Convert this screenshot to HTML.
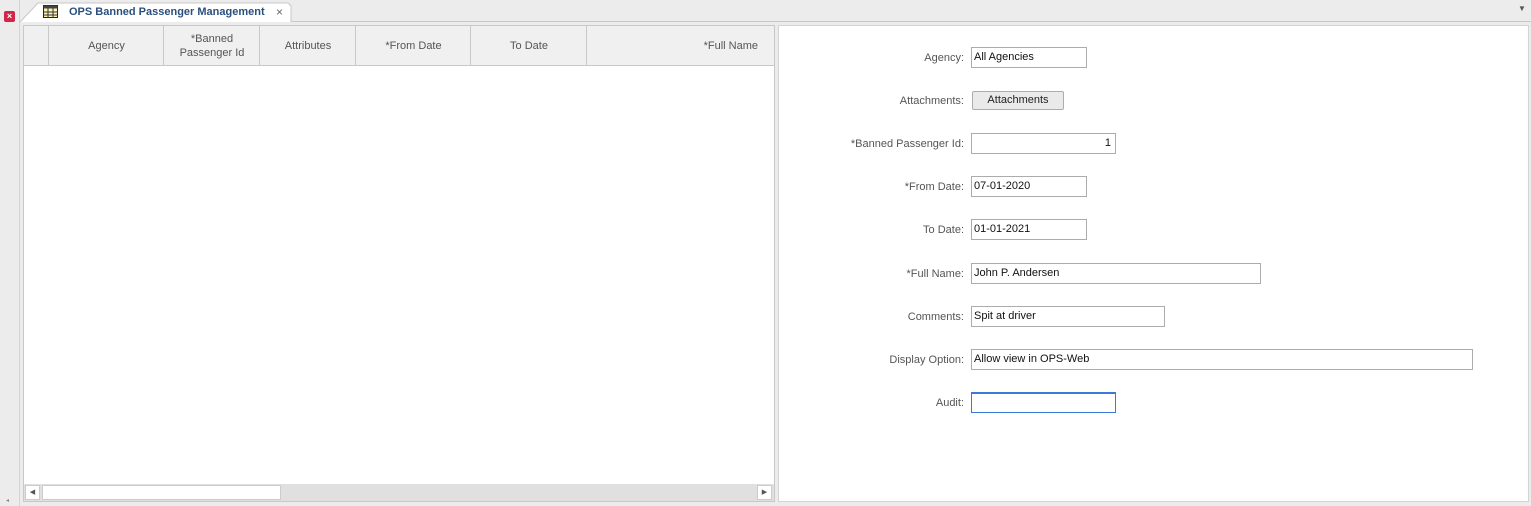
<!DOCTYPE html>
<html><head><style>
body{margin:0;width:1531px;height:506px;background:#ececec;font-family:"Liberation Sans",sans-serif;font-size:11px;color:#333;position:relative;overflow:hidden}
.a{position:absolute}
.lbl{position:absolute;right:567px;text-align:right;color:#555;font-size:11px}
.in{position:absolute;left:971px;height:21px;border:1px solid #acacac;background:#fff;box-sizing:border-box;font-size:11px;color:#111;padding:3px 2px}
.hc{position:absolute;top:26px;height:39px;border-left:1px solid #c8c8c8;display:flex;align-items:center;justify-content:center;text-align:center;color:#555;font-size:11px;line-height:14px}
</style></head><body>
<div class="a" style="left:0;top:0;width:19px;height:506px;background:#ececec;border-right:1px solid #d4d4d4"></div>
<div class="a" style="left:4px;top:11px;width:11px;height:11px;background:#d0264a;border-radius:2px;color:#fff;font-size:9px;line-height:11px;text-align:center;font-weight:bold">×</div>
<div class="a" style="left:6px;top:497px;font-size:6px;color:#888">◂</div>
<div class="a" style="left:20px;top:21px;width:1511px;height:1px;background:#c8c8c8"></div>
<svg class="a" style="left:20px;top:2px" width="272" height="21"><path d="M0 20 L18 1 L268 1 L271 4 L271 20" fill="#fff" stroke="#c8c8c8"/></svg>
<svg class="a" style="left:42px;top:4px" width="17" height="15"><rect x="1.5" y="1.5" width="14" height="12" fill="#fdf3b0" stroke="#222"/><rect x="1.5" y="1.5" width="14" height="3" fill="#444"/><path d="M6 4v10M11 4v10M2 8h14M2 11h14" stroke="#333"/></svg>
<div class="a" style="left:69px;top:6px;font-weight:bold;color:#2a4f7e;font-size:11px">OPS Banned Passenger Management</div>
<div class="a" style="left:276px;top:5px;color:#666;font-size:12px">×</div>
<div class="a" style="left:1518px;top:4px;font-size:8px;color:#555">▼</div>
<div class="a" style="left:23px;top:25px;width:752px;height:477px;background:#fff;border:1px solid #c8c8c8;box-sizing:border-box"></div>
<div class="a" style="left:24px;top:26px;width:750px;height:39px;background:#f0f0f0;border-bottom:1px solid #c8c8c8"></div>
<div class="hc" style="left:48px;width:115px">Agency</div>
<div class="hc" style="left:163px;width:96px">*Banned<br>Passenger Id</div>
<div class="hc" style="left:259px;width:96px">Attributes</div>
<div class="hc" style="left:355px;width:115px">*From Date</div>
<div class="hc" style="left:470px;width:116px">To Date</div>
<div class="hc" style="left:586px;width:171px;justify-content:flex-end">*Full Name</div>
<div class="a" style="left:24px;top:484px;width:750px;height:17px;background:#e0e0e0"></div>
<div class="a" style="left:25px;top:485px;width:15px;height:15px;background:#fff;border:1px solid #ccc;box-sizing:border-box;font-size:7px;color:#555;text-align:center;line-height:13px">◀</div>
<div class="a" style="left:42px;top:485px;width:239px;height:15px;background:#fff;border:1px solid #ccc;box-sizing:border-box"></div>
<div class="a" style="left:757px;top:485px;width:15px;height:15px;background:#fff;border:1px solid #ccc;box-sizing:border-box;font-size:7px;color:#555;text-align:center;line-height:13px">▶</div>
<div class="a" style="left:778px;top:25px;width:751px;height:477px;background:#fff;border:1px solid #d4d4d4;box-sizing:border-box"></div>
<div class="lbl" style="top:52px">Agency:</div><div class="in" style="top:47px;width:116px">All Agencies</div>
<div class="lbl" style="top:95px">Attachments:</div><div class="a" style="left:972px;top:91px;width:92px;height:19px;border:1px solid #adadad;border-radius:2px;background:#eaeaea;box-sizing:border-box;text-align:center;line-height:17px;color:#222">Attachments</div>
<div class="lbl" style="top:138px">*Banned Passenger Id:</div><div class="in" style="top:133px;width:145px;text-align:right;padding-right:4px">1</div>
<div class="lbl" style="top:181px">*From Date:</div><div class="in" style="top:176px;width:116px">07-01-2020</div>
<div class="lbl" style="top:224px">To Date:</div><div class="in" style="top:219px;width:116px">01-01-2021</div>
<div class="lbl" style="top:268px">*Full Name:</div><div class="in" style="top:263px;width:290px">John P. Andersen</div>
<div class="lbl" style="top:311px">Comments:</div><div class="in" style="top:306px;width:194px">Spit at driver</div>
<div class="lbl" style="top:354px">Display Option:</div><div class="in" style="top:349px;width:502px">Allow view in OPS-Web</div>
<div class="lbl" style="top:397px">Audit:</div><div class="in" style="top:392px;width:145px;border:1px solid #3a7bd5;border-width:2px 1px 1px 1px"></div>
</body></html>
